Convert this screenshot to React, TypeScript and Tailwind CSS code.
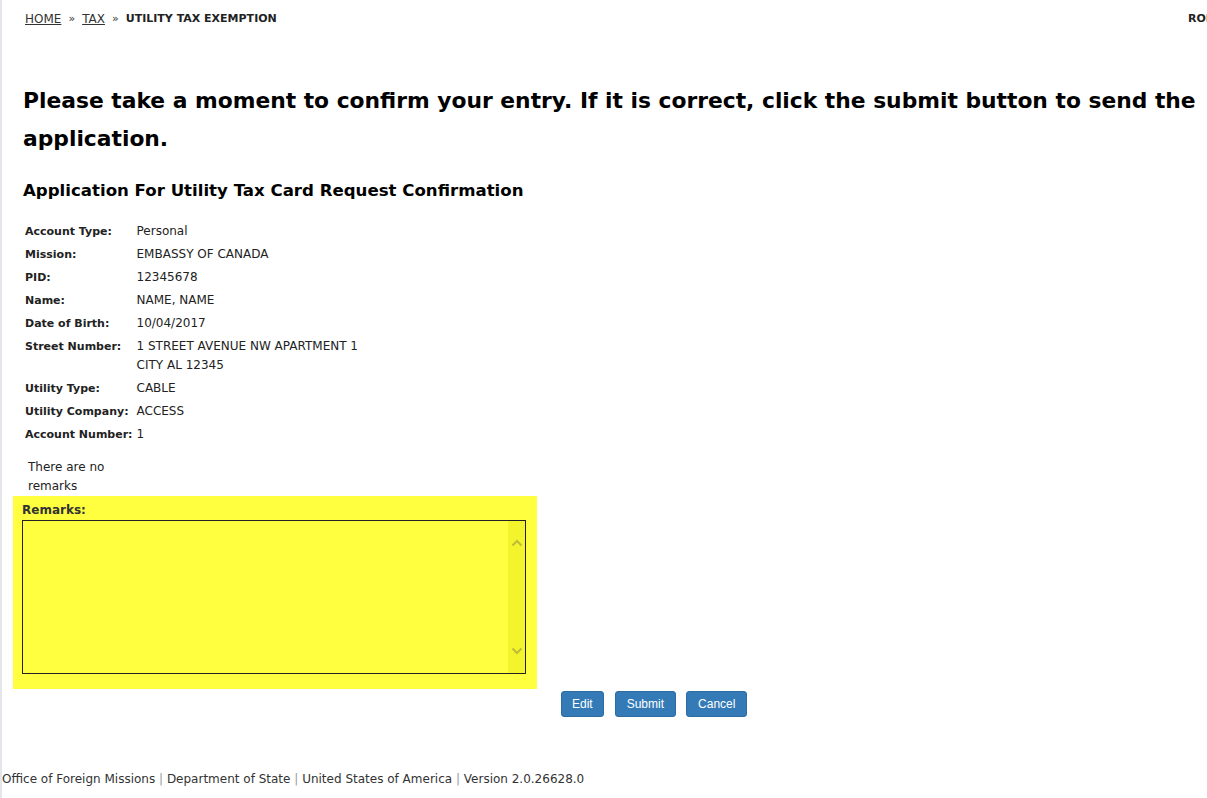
import React from "react";

const rows: { label: string; value: string[] }[] = [
  { label: "Account Type:", value: ["Personal"] },
  { label: "Mission:", value: ["EMBASSY OF CANADA"] },
  { label: "PID:", value: ["12345678"] },
  { label: "Name:", value: ["NAME, NAME"] },
  { label: "Date of Birth:", value: ["10/04/2017"] },
  { label: "Street Number:", value: ["1 STREET AVENUE NW APARTMENT 1", "CITY AL 12345"] },
  { label: "Utility Type:", value: ["CABLE"] },
  { label: "Utility Company:", value: ["ACCESS"] },
  { label: "Account Number:", value: ["1"] },
];

export default function App() {
  return (
    <div
      className="w-[1207px] h-[798px] overflow-hidden bg-white text-[#222] border-l-2 border-[#e3e6ea] relative"
      style={{ fontFamily: '"DejaVu Sans", Verdana, sans-serif' }}
    >
      <div className="flex items-center justify-between h-[38px] pl-[23px] pr-0 text-[12px] text-[#333]">
        <div className="flex items-center gap-[7px]">
          <span className="underline">HOME</span>
          <span className="text-[11px]">»</span>
          <span className="underline">TAX</span>
          <span className="text-[11px]">»</span>
          <span className="font-bold text-[11px] text-[#222]">UTILITY TAX EXEMPTION</span>
        </div>
        <span className="font-bold text-[11px] text-[#222] w-[19px] overflow-hidden whitespace-nowrap">ROLE</span>
      </div>

      <div className="pl-[21px] pt-[44px]">
        <h1 className="text-[21.8px] leading-[38px] font-bold text-black w-[1190px]">
          Please take a moment to confirm your entry. If it is correct, click the submit button to send the application.
        </h1>
        <h2 className="mt-[21px] text-[16.6px] leading-[24px] font-bold text-black">
          Application For Utility Tax Card Request Confirmation
        </h2>

        <table className="mt-[17px] ml-[2px] text-[12px] text-[#222] border-collapse">
          <tbody>
            {rows.map((r) => (
              <tr key={r.label}>
                <td className="font-bold text-[11px] align-top py-[2px] pr-[4px] leading-[19px] whitespace-nowrap">
                  {r.label}
                </td>
                <td className="align-top py-[2px] leading-[19px]">
                  {r.value.map((v) => (
                    <div key={v}>{v}</div>
                  ))}
                </td>
              </tr>
            ))}
          </tbody>
        </table>

        <div className="mt-[12px] ml-[5px] w-[80px] text-[12px] leading-[19px] text-[#222]">There are no remarks</div>
      </div>

      <div className="ml-[11px] w-[524px] bg-[#ffff40] pl-[9px] pr-[11px] pt-[6px] pb-[15px]">
        <div className="text-[12px] font-bold leading-[16px] text-[#333]">Remarks:</div>
        <div className="mt-[2px] h-[154px] border border-[#222] flex">
          <div className="flex-1" />
          <div className="w-[17px] bg-[#f4f42c] flex flex-col items-center justify-between py-[18px]">
            <svg width="12" height="8" viewBox="0 0 12 8">
              <path d="M1.5 6.5 L6 2 L10.5 6.5" fill="none" stroke="#bcbc36" strokeWidth="2" />
            </svg>
            <svg width="12" height="8" viewBox="0 0 12 8">
              <path d="M1.5 1.5 L6 6 L10.5 1.5" fill="none" stroke="#bcbc36" strokeWidth="2" />
            </svg>
          </div>
        </div>
      </div>

      <div
        className="flex pl-[559px] mt-[2px] text-[12px]"
        style={{ fontFamily: '"Liberation Sans", Arial, sans-serif' }}
      >
        <button className="h-[26px] px-[10px] bg-[#337ab7] text-white rounded-[3px] border border-[#2e6da4]">Edit</button>
        <button className="ml-[11px] h-[26px] px-[11px] bg-[#337ab7] text-white rounded-[3px] border border-[#2e6da4]">
          Submit
        </button>
        <button className="ml-[10px] h-[26px] px-[11px] bg-[#337ab7] text-white rounded-[3px] border border-[#2e6da4]">
          Cancel
        </button>
      </div>

      <div className="absolute left-0 top-[770px] text-[12px] text-[#333] whitespace-nowrap">
        Office of Foreign Missions <span className="text-[#999]">|</span> Department of State{" "}
        <span className="text-[#999]">|</span> United States of America <span className="text-[#999]">|</span> Version
        2.0.26628.0
      </div>
    </div>
  );
}
